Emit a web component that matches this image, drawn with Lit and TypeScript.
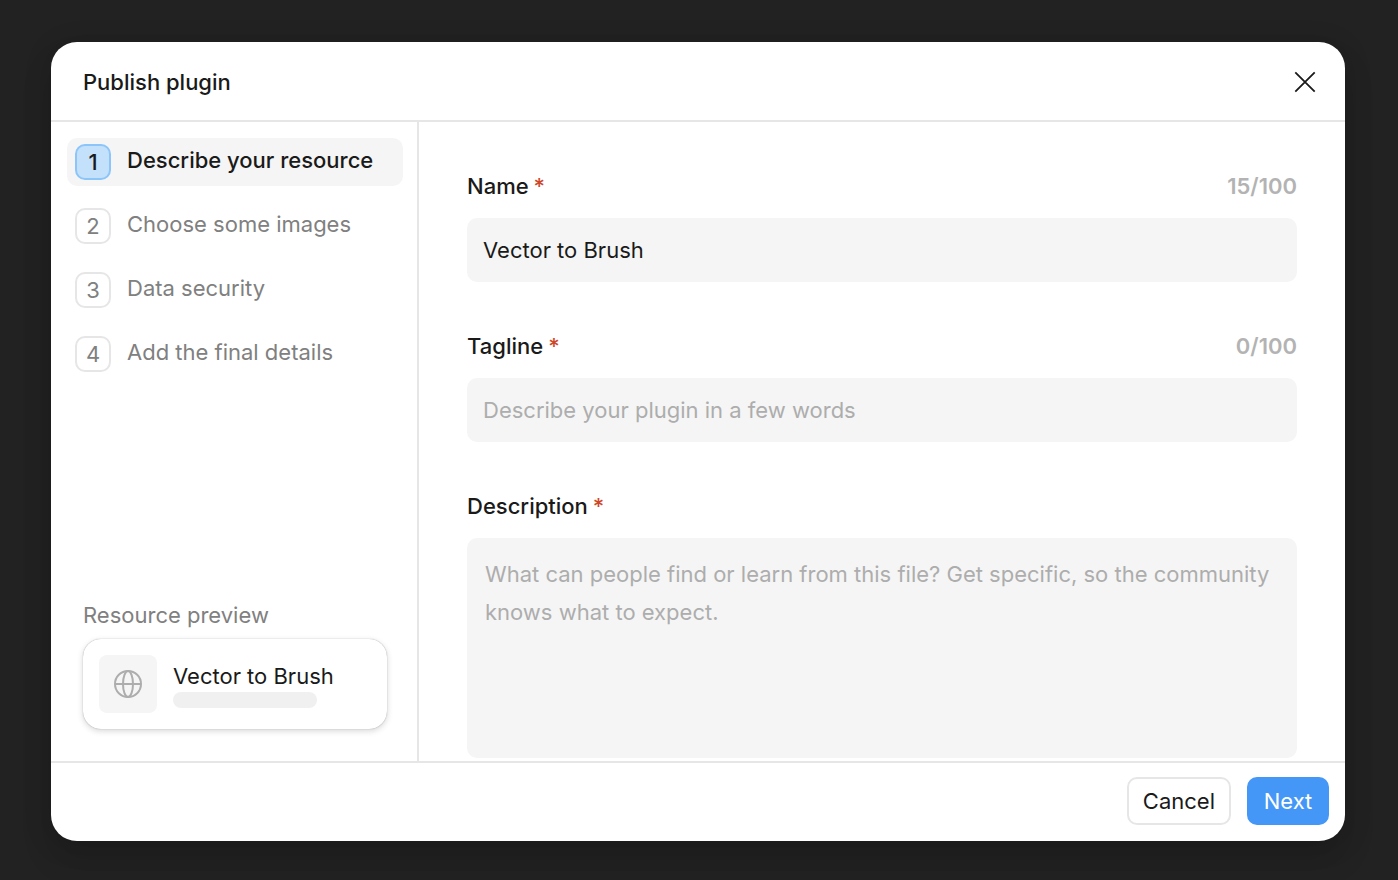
import { LitElement, html, css, nothing } from "lit";
import { customElement, state } from "lit/decorators.js";
import { classMap } from "lit/directives/class-map.js";

const STEPS = [
  "Describe your resource",
  "Choose some images",
  "Data security",
  "Add the final details",
];

const LIMIT = 100;

@customElement("app-root")
export class AppRoot extends LitElement {
  @state() private name = "Vector to Brush";
  @state() private tagline = "";
  @state() private step = 0;

  static styles = css`
    :host {
      display: block;
      box-sizing: border-box;
      height: 100vh;
      padding: 42px 53px 39px 51px;
      overflow: hidden;
      background: #222222;
      color: #1a1a1a;
      font-family: Inter, "Liberation Sans", sans-serif;
      font-size: 22px;
      line-height: 32px;
    }
    *,
    *::before,
    *::after {
      box-sizing: border-box;
    }
    button,
    input,
    textarea {
      margin: 0;
      border: 0;
      font: inherit;
      color: inherit;
    }
    button {
      cursor: pointer;
    }
    .dialog {
      display: flex;
      flex-direction: column;
      height: 100%;
      border-radius: 26px;
      background: #ffffff;
      box-shadow: 0 20px 32px rgba(0, 0, 0, 0.12), 0 4px 28px rgba(0, 0, 0, 0.15);
      overflow: hidden;
    }
    .header {
      display: flex;
      align-items: center;
      justify-content: space-between;
      flex: none;
      height: 80px;
      padding: 2px 16px 0 32px;
      border-bottom: 2px solid #e6e6e6;
    }
    .title {
      margin: 0;
      font-size: 22px;
      font-weight: 500;
    }
    .close {
      display: grid;
      place-items: center;
      width: 48px;
      height: 48px;
      padding: 0;
      background: none;
    }
    .body {
      display: flex;
      flex: 1;
      min-height: 0;
    }
    .sidebar {
      display: flex;
      flex-direction: column;
      justify-content: space-between;
      flex: none;
      width: 368px;
      padding: 16px 14px 32px 16px;
      border-right: 2px solid #e6e6e6;
    }
    .steps {
      display: flex;
      flex-direction: column;
      gap: 16px;
      margin: 0;
      padding: 0;
      list-style: none;
    }
    .step {
      display: flex;
      align-items: flex-start;
      gap: 16px;
      width: 100%;
      height: 48px;
      padding: 6px 8px;
      border-radius: 10px;
      background: none;
      color: #808080;
      text-align: left;
      white-space: nowrap;
    }
    .step.current {
      background: #f5f5f5;
      color: #1a1a1a;
      font-weight: 500;
    }
    .number {
      flex: none;
      width: 36px;
      height: 36px;
      border: 2px solid #e6e6e6;
      border-radius: 10px;
      text-align: center;
    }
    .current .number {
      border-color: #8cc5fa;
      background: #c4e1fc;
    }
    .preview {
      display: flex;
      flex-direction: column;
      gap: 8px;
      padding: 0 16px;
    }
    .caption {
      color: #808080;
    }
    .card {
      display: flex;
      align-items: center;
      gap: 16px;
      padding: 16px;
      border-radius: 18px;
      box-shadow: 0 0 1px rgba(0, 0, 0, 0.4), 0 2px 6px rgba(0, 0, 0, 0.16);
    }
    .thumb {
      display: grid;
      place-items: center;
      flex: none;
      width: 58px;
      height: 58px;
      border-radius: 8px;
      background: #f5f5f5;
    }
    .summary {
      flex: 1;
      min-width: 0;
    }
    .name {
      overflow: hidden;
      text-overflow: ellipsis;
      white-space: nowrap;
    }
    .skeleton {
      width: 144px;
      height: 16px;
      border-radius: 8px;
      background: #f0f0f0;
    }
    .form {
      display: flex;
      flex-direction: column;
      gap: 32px;
      flex: 1;
      min-width: 0;
      padding: 32px 48px 0;
      overflow: auto;
    }
    .label-row {
      display: flex;
      align-items: center;
      justify-content: space-between;
      height: 64px;
      font-weight: 500;
    }
    .required {
      margin-left: 5px;
      color: #ce4628;
    }
    .count {
      color: #b3b3b3;
      font-weight: 600;
    }
    .control {
      display: block;
      width: 100%;
      height: 64px;
      padding: 0 16px;
      border-radius: 10px;
      outline: none;
      background: #f5f5f5;
    }
    .control::placeholder {
      color: #adadad;
      opacity: 1;
    }
    .area {
      height: 220px;
      padding: 17px 18px;
      line-height: 38px;
      resize: none;
    }
    .footer {
      display: flex;
      align-items: center;
      justify-content: flex-end;
      gap: 16px;
      flex: none;
      height: 80px;
      padding: 0 16px 2px;
      border-top: 2px solid #e6e6e6;
    }
    .button {
      height: 48px;
      padding: 0 14px;
      border: 2px solid #e6e6e6;
      border-radius: 10px;
      background: #ffffff;
    }
    .button.primary {
      min-width: 82px;
      border-color: #4597f7;
      background: #4597f7;
      color: #ffffff;
    }
  `;

  private labelRow(id: string, text: string, length?: number) {
    return html`
      <div class="label-row">
        <label for=${id}>${text}<span class="required">*</span></label>
        ${length === undefined ? nothing : html`<span class="count">${length}/${LIMIT}</span>`}
      </div>
    `;
  }

  render() {
    return html`
      <div class="dialog" role="dialog" aria-labelledby="title">
        <header class="header">
          <h1 class="title" id="title">Publish plugin</h1>
          <button class="close" type="button" aria-label="Close">
            <svg width="24" height="24" viewBox="0 0 24 24" fill="none" stroke="#1a1a1a" stroke-width="1.8">
              <path d="M2.3 2.3 21.7 21.7M21.7 2.3 2.3 21.7" />
            </svg>
          </button>
        </header>
        <div class="body">
          <aside class="sidebar">
            <ol class="steps">
              ${STEPS.map(
                (label, i) => html`
                  <li>
                    <button
                      type="button"
                      class=${classMap({ step: true, current: i === this.step })}
                      @click=${() => (this.step = i)}
                    >
                      <span class="number">${i + 1}</span><span>${label}</span>
                    </button>
                  </li>
                `
              )}
            </ol>
            <div class="preview">
              <div class="caption">Resource preview</div>
              <div class="card">
                <div class="thumb">
                  <svg width="30" height="30" viewBox="0 0 30 30" fill="none" stroke="#adadad" stroke-width="2" aria-hidden="true">
                    <circle cx="15" cy="15" r="13" />
                    <ellipse cx="15" cy="15" rx="5" ry="13" />
                    <path d="M2 15h26" />
                  </svg>
                </div>
                <div class="summary">
                  <div class="name">${this.name}</div>
                  <div class="skeleton"></div>
                </div>
              </div>
            </div>
          </aside>
          <main class="form">
            <div>
              ${this.labelRow("name", "Name", this.name.length)}
              <input
                class="control"
                id="name"
                maxlength=${LIMIT}
                .value=${this.name}
                @input=${(e: Event) => (this.name = (e.target as HTMLInputElement).value)}
              />
            </div>
            <div>
              ${this.labelRow("tagline", "Tagline", this.tagline.length)}
              <input
                class="control"
                id="tagline"
                maxlength=${LIMIT}
                placeholder="Describe your plugin in a few words"
                .value=${this.tagline}
                @input=${(e: Event) => (this.tagline = (e.target as HTMLInputElement).value)}
              />
            </div>
            <div>
              ${this.labelRow("description", "Description")}
              <textarea
                class="control area"
                id="description"
                placeholder="What can people find or learn from this file? Get specific, so the community knows what to expect."
              ></textarea>
            </div>
          </main>
        </div>
        <footer class="footer">
          <button class="button" type="button">Cancel</button>
          <button class="button primary" type="button">Next</button>
        </footer>
      </div>
    `;
  }
}
